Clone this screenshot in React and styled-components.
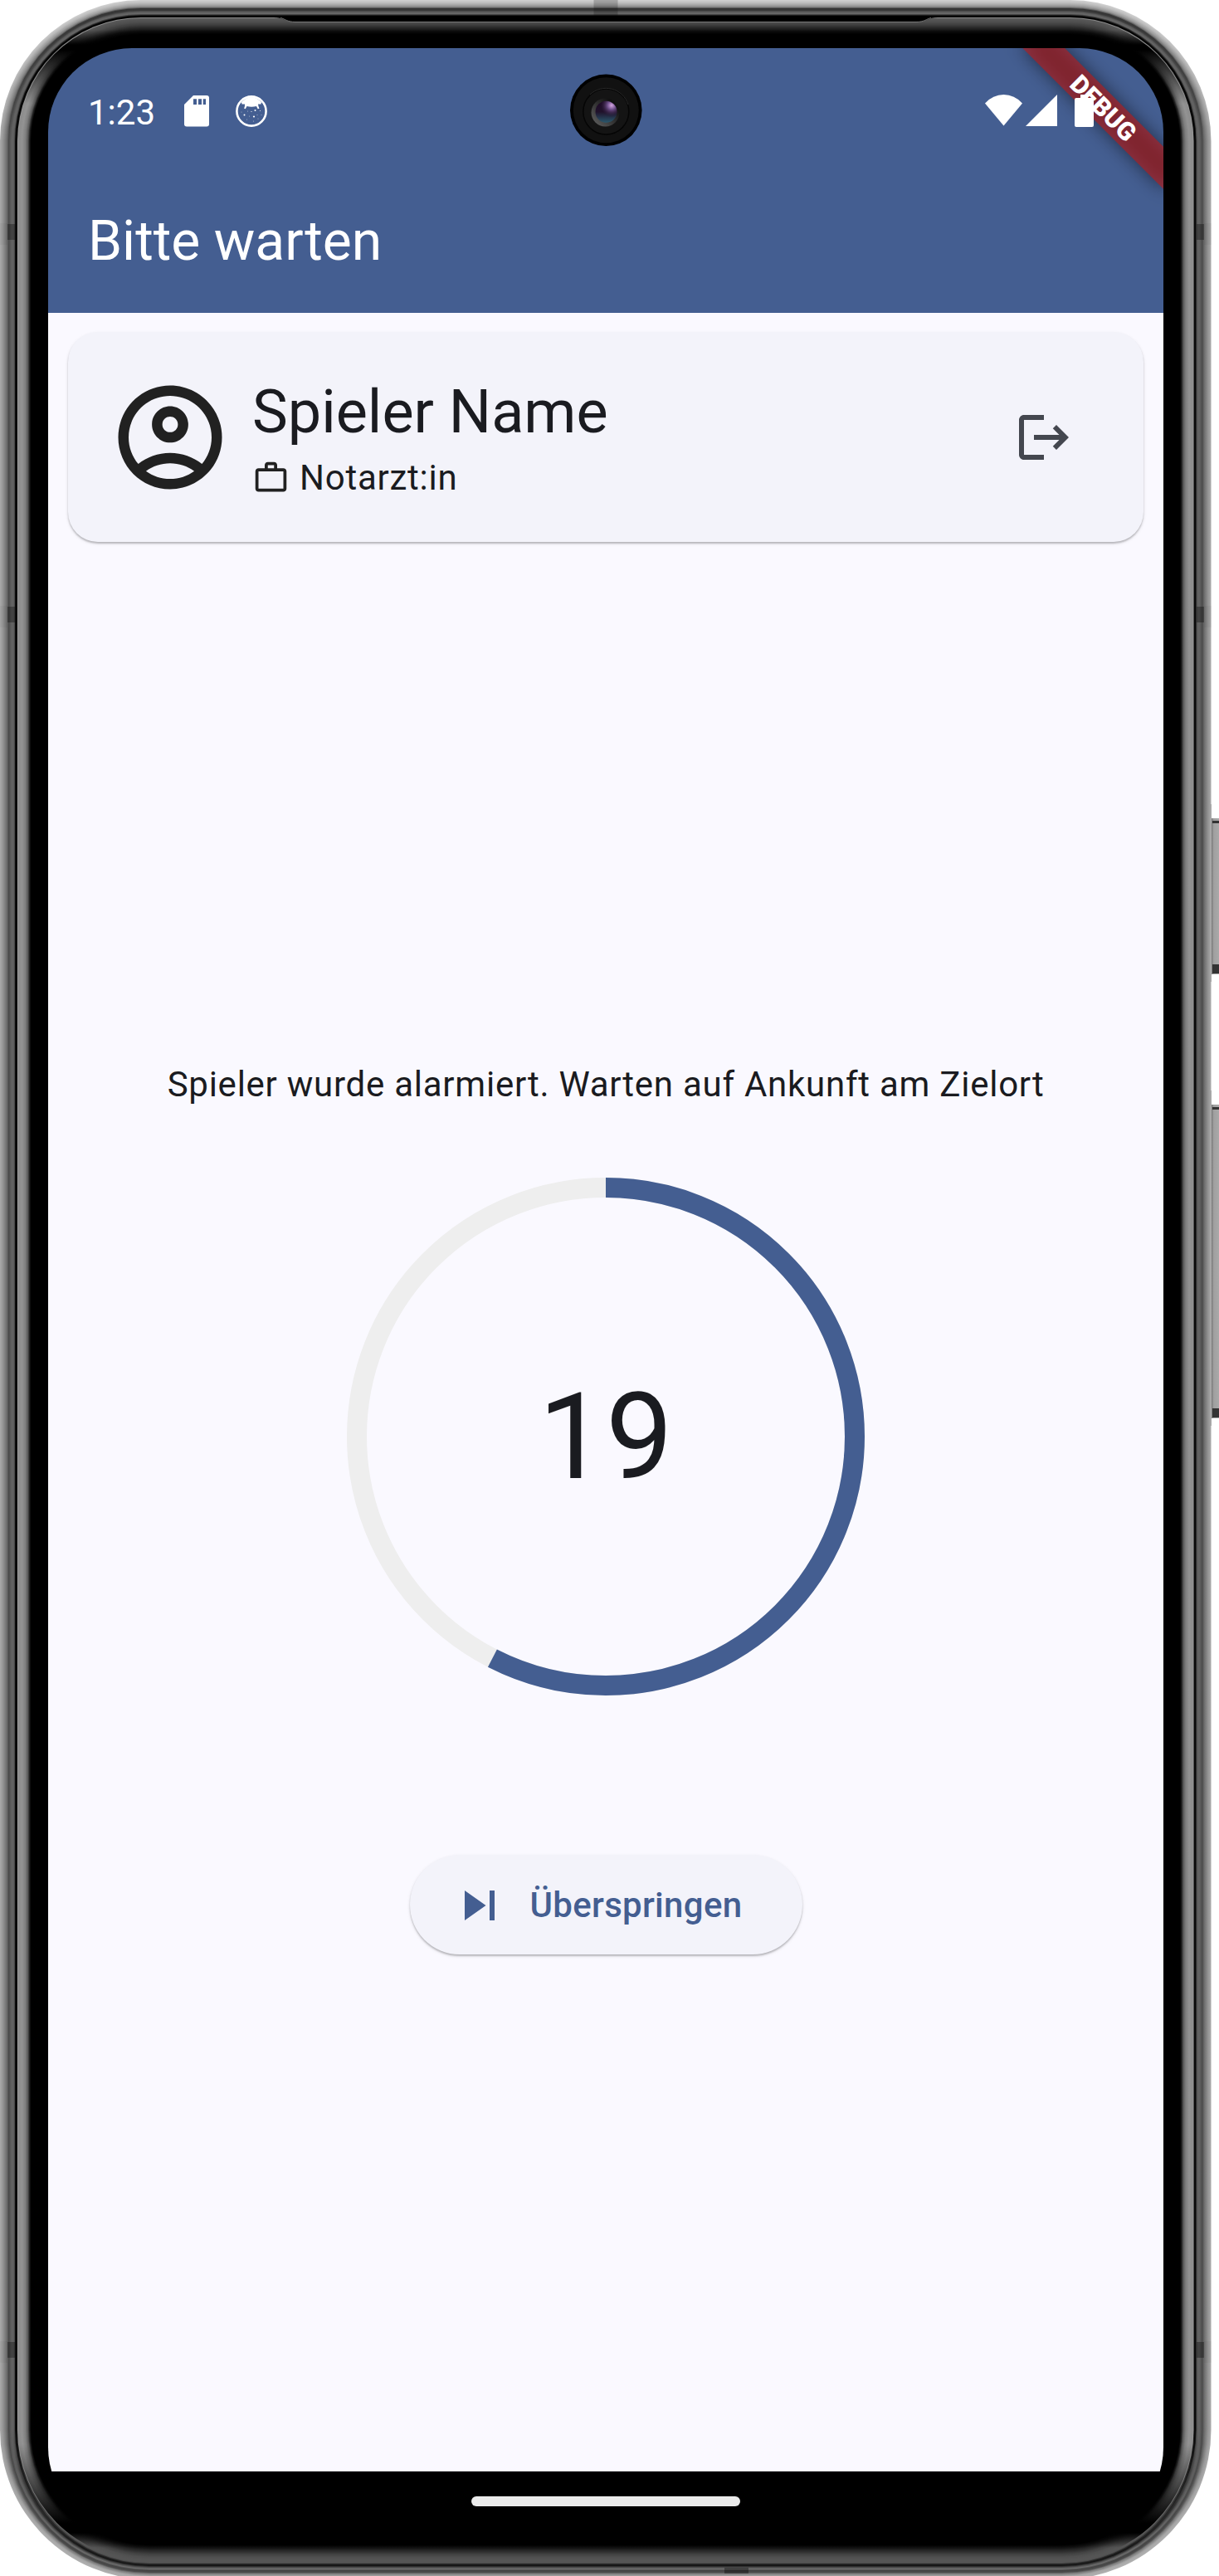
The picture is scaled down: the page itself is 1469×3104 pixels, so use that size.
import React from "react";
import styled, { createGlobalStyle } from "styled-components";

const PRIMARY = "#445e91";
const SURFACE = "#faf9ff";
const CONTAINER = "#f3f3fa";
const INK = "#1a1b20";
const ELEVATION = "0 2px 2px rgba(0, 0, 0, 0.2), 0 2px 4px rgba(0, 0, 0, 0.1)";

const GlobalStyle = createGlobalStyle`
  body { margin: 0; background: #fff; font-family: Roboto, sans-serif; overflow: hidden; }
  * { box-sizing: border-box; }
`;

const Device = styled.div`
  position: relative;
  width: 1469px;
  height: 3104px;
  padding: 58px 67px 54px 58px;
  overflow: hidden;
`;

const ShellArt = styled.svg`
  position: absolute;
  inset: 0;
`;

const Screen = styled.main`
  position: relative;
  display: flex;
  flex-direction: column;
  width: 1344px;
  height: 2992px;
  border-radius: 101px;
  overflow: hidden;
  background: #000;
`;

const AppHeader = styled.header`
  position: relative;
  flex: none;
  height: 319px;
  background: ${PRIMARY};
  color: #fff;
  overflow: hidden;
`;

const StatusBar = styled.div`
  position: relative;
  display: flex;
  align-items: center;
  height: 151px;
  padding: 0 84px 0 48px;
`;

const Clock = styled.span`
  width: 116px;
  padding-top: 4px;
  font-size: 42px;
  line-height: 60px;
`;

const StatusIcons = styled.div`
  display: flex;
  align-items: center;
  gap: ${(p) => p.$gap}px;
  margin-left: ${(p) => (p.$end ? "auto" : "0")};
`;

const Spacer = styled.i`
  width: ${(p) => p.$w}px;
`;

const Title = styled.h1`
  margin: 40px 0 0 48px;
  font-size: 66px;
  line-height: 84px;
  font-weight: 400;
`;

const DebugRibbon = styled.div`
  position: absolute;
  top: 84px;
  right: -120px;
  width: 240px;
  height: 36px;
  transform-origin: 120px -84px;
  transform: rotate(45deg);
  background: rgba(183, 28, 28, 0.627);
  text-align: center;
  font-size: 30.6px;
  line-height: 37px;
  font-weight: 900;
`;

const RibbonShade = styled(DebugRibbon)`
  background: rgba(0, 0, 0, 0.5);
  filter: blur(11px);
`;

const Camera = styled.svg`
  position: absolute;
  left: 628px;
  top: 31px;
`;

const Body = styled.section`
  display: flex;
  flex-direction: column;
  align-items: center;
  height: 2601px;
  padding-top: 23px;
  background: ${SURFACE};
  color: ${INK};
`;

const PlayerCard = styled.article`
  display: flex;
  align-items: center;
  gap: 24px;
  width: 1296px;
  height: 253px;
  padding: 0 84px 0 48px;
  border-radius: 36px;
  background: ${CONTAINER};
  box-shadow: ${ELEVATION};
`;

const PlayerText = styled.div`
  flex: 1;
  padding-top: 2px;
`;

const PlayerName = styled.h2`
  margin: 0;
  font-size: 72px;
  line-height: 96px;
  font-weight: 400;
`;

const Role = styled.div`
  display: flex;
  align-items: center;
  gap: 12px;
  font-size: 42px;
  line-height: 61px;
  letter-spacing: 0.75px;
`;

const Message = styled.p`
  margin: 624px 0 0;
  font-size: 42px;
  line-height: 60px;
  letter-spacing: 0.75px;
`;

const Timer = styled.div`
  display: grid;
  place-items: center;
  width: 624px;
  height: 624px;
  margin-top: 82px;
  > * { grid-area: 1 / 1; }
`;

const Seconds = styled.span`
  padding-top: 2px;
  font-size: 144px;
  line-height: 168px;
`;

const SkipButton = styled.button`
  display: flex;
  align-items: center;
  gap: 25px;
  width: 473px;
  height: 120px;
  margin: 192px 0 0;
  padding: 2px 0 0 48px;
  border: 0;
  border-radius: 60px;
  background: ${CONTAINER};
  box-shadow: ${ELEVATION};
  color: ${PRIMARY};
  font: 500 42px/60px Roboto, sans-serif;
  letter-spacing: 0.3px;
`;

const NavBar = styled.nav`
  display: flex;
  justify-content: center;
  padding-top: 30px;
`;

const Handle = styled.div`
  width: 324px;
  height: 12px;
  border-radius: 6px;
  background: #ebebeb;
`;

const GlyphSvg = styled.svg`
  flex: none;
`;

const Glyph = ({ size, d, color = "currentColor" }) => (
  <GlyphSvg width={size} height={size} viewBox="0 0 24 24" fill={color}>
    <path d={d} />
  </GlyphSvg>
);

const ICONS = {
  account:
    "M12 2C6.48 2 2 6.48 2 12s4.48 10 10 10 10-4.48 10-10S17.52 2 12 2zM7.35 18.5C8.66 17.56 10.26 17 12 17s3.34.56 4.65 1.5C15.34 19.44 13.74 20 12 20s-3.34-.56-4.65-1.5zm10.79-1.38C16.45 15.8 14.32 15 12 15s-4.45.8-6.14 2.12C4.7 15.73 4 13.95 4 12c0-4.42 3.58-8 8-8s8 3.58 8 8c0 1.95-.7 3.73-1.86 5.12zM12 6c-1.93 0-3.5 1.57-3.5 3.5S10.07 13 12 13s3.5-1.57 3.5-3.5S13.93 6 12 6zm0 5c-.83 0-1.5-.67-1.5-1.5S11.17 8 12 8s1.5.67 1.5 1.5S12.83 11 12 11z",
  work: "M14 6V4h-4v2h4zM4 8v11h16V8H4zm16-2c1.11 0 2 .89 2 2v11c0 1.11-.89 2-2 2H4c-1.11 0-2-.89-2-2l.01-11c0-1.11.88-2 1.99-2h4V4c0-1.11.89-2 2-2h4c1.11 0 2 .89 2 2v2h4z",
  logout:
    "M17 7l-1.41 1.41L18.17 11H8v2h10.17l-2.58 2.58L17 17l5-5zM4 5h8V3H4c-1.1 0-2 .9-2 2v14c0 1.1.9 2 2 2h8v-2H4V5z",
  skip: "M6 18l8.5-6L6 6v12zM16 6v12h2V6h-2z",
};

/* Colour of the metal rim by distance from its outer edge: side, top, bottom. */
const RIM = [
  [0, "#a8a8a8", "#cfcfcf", "#b0b0b0"],
  [3, "#959595", "#bdbdbd", "#a8a8a8"],
  [6, "#7c7c7c", "#a0a0a0", "#808080"],
  [8, "#6a6a6a", "#838383", "#4c4c4c"],
  [10, "#4a4a4a", "#333333", "#434343"],
  [12, "#585858", "#3a3a3a", "#6c6c6c"],
  [14, "#636363", "#5c5c5c", "#484848"],
  [16, "#5e5e5e", "#686868", "#141414"],
  [17, "#4a4a4a", "#454545", "#1c1c1c"],
  [18, "#101010", "#1c1c1c", "#2a2a2a"],
  [19, "#000000", "#000000", "#4c4c4c"],
  [20, "#161616", "#000000", "#555555"],
  [21, "#9a9a9a", "#8a8a8a", "#555555"],
  [22, "#8c8c8c", "#585858", "#555555"],
  [26, "#939393", "#4e4e4e", "#505050"],
  [30, "#7f7f7f", "#3c3c3c", "#404040"],
  [33, "#5a5a5a", "#282828", "#2d2d2d"],
  [35, "#202020", "#1c1c1c", "#222222"],
  [37, "#000000", "#0e0e0e", "#141414"],
  [41, "#000000", "#000000", "#000000"],
];

const channels = (hex) => [1, 3, 5].map((k) => parseInt(hex.slice(k, k + 2), 16));

const rimColor = (depth, column) => {
  const next = RIM.findIndex((stop) => stop[0] > depth);
  if (next < 0) return "#000";
  const a = RIM[next - 1];
  const b = RIM[next];
  const t = (depth - a[0]) / (b[0] - a[0]);
  const ca = channels(a[column]);
  const cb = channels(b[column]);
  return `rgb(${ca.map((v, k) => Math.round(v + (cb[k] - v) * t)).join(",")})`;
};

const shellPath = (i) => {
  const l = i, t = i, r = 1459.5 - i, b = 3108 - i;
  const rt = 170 - i, rb = 180 - i;
  return `M${l + rt} ${t}H${r - rt}A${rt} ${rt} 0 0 1 ${r} ${t + rt}V${b - rb}A${rb} ${rb} 0 0 1 ${r - rb} ${b}H${l + rb}A${rb} ${rb} 0 0 1 ${l} ${b - rb}V${t + rt}A${rt} ${rt} 0 0 1 ${l + rt} ${t}Z`;
};

const RINGS = Array.from({ length: 42 }, (_, i) => i);

const Shell = () => (
  <ShellArt width="1469" height="3104" viewBox="0 0 1469 3104">
    <defs>
      {RINGS.map((i) => {
        const gloss = i > 21;
        return (
          <linearGradient key={i} id={`rim${i}`} gradientUnits="userSpaceOnUse" x1="0" y1="0" x2="0" y2="3104">
            <stop offset={(gloss ? 36 : 20) / 3104} stopColor={rimColor(i, 2)} />
            {gloss && <stop offset={54 / 3104} stopColor="#000" />}
            {gloss && <stop offset={60 / 3104} stopColor="#000" />}
            <stop offset={(gloss ? 125 : 170) / 3104} stopColor={rimColor(i, 1)} />
            <stop offset={(gloss ? 2945 : 2925) / 3104} stopColor={rimColor(i, 1)} />
            {gloss && <stop offset={3040 / 3104} stopColor="#000" />}
            {gloss && <stop offset={3052 / 3104} stopColor="#000" />}
            <stop offset={3070 / 3104} stopColor={rimColor(i, 3)} />
          </linearGradient>
        );
      })}
      <linearGradient id="key" x1="0" y1="0" x2="1" y2="0">
        <stop offset="0" stopColor="#777" />
        <stop offset="0.3" stopColor="#a0a0a0" />
        <stop offset="1" stopColor="#a9a9a9" />
      </linearGradient>
    </defs>
    {[[986, 188], [1331, 378]].map(([y, h]) => (
      <g key={y}>
        <rect x="1459" y={y - 17} width="1" height={h + 26} fill="#aaa" />
        <rect x="1460" y={y} width="9" height={h} fill="url(#key)" />
        <rect x="1461" y={y + 3} width="8" height="3" fill="#333" />
        <rect x="1461" y={y + h - 12} width="8" height="11" fill="#333" />
      </g>
    ))}
    {RINGS.map((i) => (
      <path key={i} d={shellPath(i)} fill={`url(#rim${i})`} />
    ))}
    <path d="M330 21C341 21 344 26.500 356 26.500H1104C1116 26.500 1119 21 1130 21Z" fill="#000" />
    <path d="M338 21.500C344 23 346 26.500 356 26.500H1104C1114 26.500 1116 23 1122 21.500" fill="none" stroke="#777" />
    {[270, 731, 2822].map((y) => (
      <g key={y} fill="#000">
        <rect x="9" y={y} width="9" height="19" opacity="0.32" />
        <rect x="1442" y={y} width="9" height="19" opacity="0.32" />
        <rect x="0" y={y - 1} width="9" height="26" opacity="0.03" />
        <rect x="1451" y={y - 1} width="9" height="26" opacity="0.03" />
      </g>
    ))}
    <rect x="715.500" y="0" width="29" height="18.500" opacity="0.2" />
    <rect x="873" y="3094" width="29" height="7" opacity="0.35" />
  </ShellArt>
);

const CameraLens = () => (
  <Camera width="88" height="88" viewBox="0 0 88 88">
    <defs>
      <radialGradient id="lensGlare" cx="0.75" cy="0.2" r="0.55">
        <stop offset="0" stopColor="#d5a5e2" />
        <stop offset="0.35" stopColor="#70508c" />
        <stop offset="1" stopColor="#1b0c22" stopOpacity="0" />
      </radialGradient>
      <linearGradient id="lens" x1="0" y1="0" x2="0" y2="1">
        <stop offset="0" stopColor="#1e0a26" />
        <stop offset="0.5" stopColor="#20122b" />
        <stop offset="1" stopColor="#2a586c" />
      </linearGradient>
      <linearGradient id="bezel" x1="0.1" y1="0.9" x2="0.8" y2="0.2">
        <stop offset="0" stopColor="#5c5c5c" />
        <stop offset="1" stopColor="#101010" />
      </linearGradient>
    </defs>
    <circle cx="44.300" cy="43.800" r="43.300" fill="#000" />
    <circle cx="44.300" cy="43.800" r="39.500" fill="#111" />
    <circle cx="44.300" cy="45.500" r="27.500" fill="#141414" stroke="#050505" strokeWidth="1.500" />
    <path d="M25 25A28 28 0 0 1 71 37" fill="none" stroke="#292929" />
    <circle cx="43.500" cy="46.500" r="17" fill="url(#bezel)" />
    <circle cx="44.500" cy="45.800" r="13" fill="url(#lens)" />
    <circle cx="44.500" cy="45.800" r="13" fill="url(#lensGlare)" />
  </Camera>
);

const SdCard = () => (
  <svg width="30" height="38" viewBox="0 0 30 38">
    <path d="M11 0H27a3 3 0 0 1 3 3V34.500a3 3 0 0 1-3 3H3a3 3 0 0 1-3-3V11Z" fill="#fff" />
    <path d="M11 4.300h4v6.700h-4zM17 4.300h4v6.700h-4zM22.700 4.300h3.300v6.700h-3.300z" fill={PRIMARY} />
  </svg>
);

const CatBadge = () => (
  <svg width="38" height="38" viewBox="0 0 38 38">
    <circle cx="19" cy="19" r="17.600" fill="none" stroke="#fff" strokeWidth="2.600" />
    <path d="M7 8Q19-4 31 8L30.500 10.500L27 10.500Q27.300 13.500 28.500 15.800L26.700 16.300L25 13Q19 14.500 13.500 13L11.800 16.300L10 15.500Q11.300 13 11 10.500L7.500 10.500Z" fill="#fff" />
    <g fill="#fff">
      <circle cx="10.500" cy="23.500" r="1" />
      <circle cx="23.500" cy="18" r="1" />
      <circle cx="22" cy="25.500" r="1.100" />
      <circle cx="19" cy="19.500" r="0.600" />
      <circle cx="29.500" cy="18.500" r="0.500" />
    </g>
    <g fill="#fff" opacity="0.6">
      <circle cx="7" cy="20" r="0.500" />
      <circle cx="14.500" cy="19" r="0.500" />
      <circle cx="16.500" cy="25" r="0.500" />
      <circle cx="26" cy="23.500" r="0.500" />
      <circle cx="31" cy="23.500" r="0.500" />
      <circle cx="13.500" cy="29" r="0.500" />
      <circle cx="21.500" cy="31" r="0.600" />
      <circle cx="27" cy="28" r="0.500" />
    </g>
  </svg>
);

const Wifi = () => (
  <svg width="45" height="39" viewBox="0 0 45 39">
    <path d="M0 10.500Q9.500 0 22.500 0T45 10.500L22.500 37.500Z" fill="#fff" />
  </svg>
);

const Signal = () => (
  <svg width="38" height="39" viewBox="0 0 38 39">
    <path d="M38 0V38H0Z" fill="#fff" />
  </svg>
);

const Battery = () => (
  <svg width="23" height="39" viewBox="0 0 23 39">
    <path d="M7 0H16V4H21a2 2 0 0 1 2 2V37a2 2 0 0 1-2 2H2a2 2 0 0 1-2-2V6a2 2 0 0 1 2-2H7Z" fill="#fff" />
  </svg>
);

const CIRCUMFERENCE = 2 * Math.PI * 300;

const CountdownRing = ({ progress }) => (
  <svg width="624" height="624" viewBox="0 0 624 624" fill="none" strokeWidth="24">
    <circle cx="312" cy="312" r="300" stroke="#eeeeee" />
    <circle
      cx="312"
      cy="312"
      r="300"
      stroke={PRIMARY}
      strokeDasharray={`${CIRCUMFERENCE * progress} ${CIRCUMFERENCE}`}
      transform="rotate(-90 312 312)"
    />
  </svg>
);

export default function App() {
  return (
    <>
      <GlobalStyle />
      <Device>
        <Shell />
        <Screen>
          <AppHeader>
            <RibbonShade />
            <DebugRibbon>DEBUG</DebugRibbon>
            <StatusBar>
              <Clock>1:23</Clock>
              <StatusIcons $gap={32}>
                <SdCard />
                <CatBadge />
              </StatusIcons>
              <StatusIcons $end $gap={0}>
                <Wifi />
                <Spacer $w={4} />
                <Signal />
                <Spacer $w={21} />
                <Battery />
              </StatusIcons>
            </StatusBar>
            <Title>Bitte warten</Title>
            <CameraLens />
          </AppHeader>
          <Body>
            <PlayerCard>
              <Glyph size={150} d={ICONS.account} color="#212121" />
              <PlayerText>
                <PlayerName>Spieler Name</PlayerName>
                <Role>
                  <Glyph size={45} d={ICONS.work} color="#212121" />
                  Notarzt:in
                </Role>
              </PlayerText>
              <Glyph size={72} d={ICONS.logout} color="#44474f" />
            </PlayerCard>
            <Message>Spieler wurde alarmiert. Warten auf Ankunft am Zielort</Message>
            <Timer>
              <CountdownRing progress={0.575} />
              <Seconds>19</Seconds>
            </Timer>
            <SkipButton>
              <Glyph size={72} d={ICONS.skip} />
              Überspringen
            </SkipButton>
          </Body>
          <NavBar>
            <Handle />
          </NavBar>
        </Screen>
      </Device>
    </>
  );
}
